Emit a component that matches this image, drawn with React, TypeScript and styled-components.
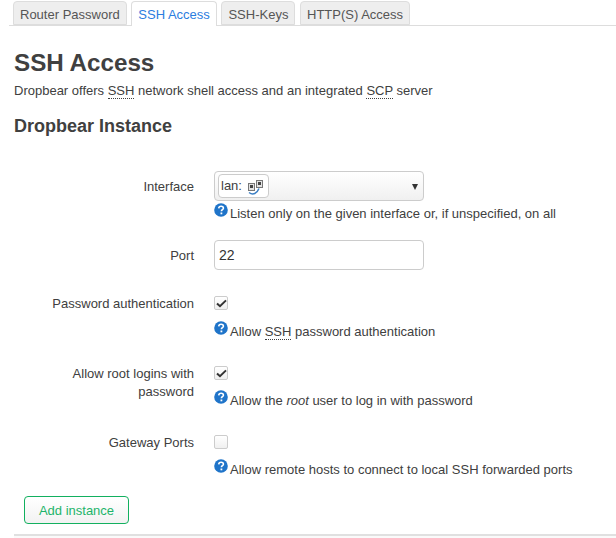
import * as React from 'react';
import styled, { createGlobalStyle } from 'styled-components';

const GlobalStyle = createGlobalStyle`
  html, body {
    margin: 0;
    padding: 0;
    background: #fff;
    overflow: hidden;
  }
  body {
    font-family: "Liberation Sans", Arial, sans-serif;
    font-size: 13px;
    line-height: 18px;
    color: #404040;
  }
`;

const Page = styled.div`
  width: 616px;
  height: 538px;
  overflow: hidden;
`;

const Tabs = styled.ul`
  display: flex;
  gap: 4.6px;
  list-style: none;
  margin: 1px 0 0 9px;
  padding: 0 0 0 4px;
  height: 24px;
  border-bottom: 1px solid #ddd;
`;

const Tab = styled.li<{ $active?: boolean }>`
  height: ${p => (p.$active ? 25 : 24)}px;
  box-sizing: border-box;
  padding: 0 6px;
  line-height: 26px;
  border: 1px solid #ddd;
  border-bottom: ${p => (p.$active ? 'none' : '1px solid #ddd')};
  border-radius: 4px 4px 0 0;
  background: ${p => (p.$active ? '#fff' : '#eee')};
  color: ${p => (p.$active ? '#2b7de0' : '#555')};
`;

const Content = styled.div`
  padding: 0 0 0 14px;
`;

const Title = styled.h2`
  margin: 22px 0 0;
  font-size: 24.2px;
  line-height: 30px;
  font-weight: 700;
  color: #404040;
`;

const Description = styled.p`
  margin: 4px 0 0;
  color: #404040;
`;

const Abbr = styled.abbr`
  text-decoration: none;
  border-bottom: 1px dotted #404040;
`;

const SectionTitle = styled.h3`
  margin: 15px 0 0;
  font-size: 18px;
  line-height: 22px;
  font-weight: 700;
  color: #404040;
`;

const Form = styled.div`
  margin-top: 34px;
  display: flex;
  flex-direction: column;
`;

const Row = styled.div<{ $gap: number }>`
  display: grid;
  grid-template-columns: 180px 1fr;
  column-gap: 20px;
  margin-bottom: ${p => p.$gap}px;
`;

const Label = styled.label<{ $top: number }>`
  text-align: right;
  color: #404040;
  padding-top: ${p => p.$top}px;
`;

const Field = styled.div`
  display: flex;
  flex-direction: column;
  align-items: flex-start;
`;

const Select = styled.div`
  width: 210px;
  height: 30px;
  box-sizing: border-box;
  border: 1px solid #ccc;
  border-radius: 4px;
  background: linear-gradient(#fff, #f0f0f0);
  display: flex;
  align-items: center;
  justify-content: space-between;
  padding: 0 5px 0 3px;
`;

const Badge = styled.span`
  display: flex;
  align-items: center;
  gap: 5px;
  height: 24px;
  width: 51px;
  box-sizing: border-box;
  padding-left: 2px;
  border: 1px solid #ccc;
  border-radius: 4px;
  background: #fff;
`;

const Arrow = styled.span`
  width: 0;
  height: 0;
  border-left: 3px solid transparent;
  border-right: 3px solid transparent;
  border-top: 6px solid #333;
  margin-top: 2px;
`;

const TextInput = styled.div`
  width: 210px;
  height: 30px;
  box-sizing: border-box;
  border: 1px solid #ccc;
  border-radius: 4px;
  background: #fff;
  padding: 0 4px;
  font-size: 14px;
  line-height: 28px;
  color: #333;
`;

const Box = styled.span`
  display: flex;
  align-items: center;
  justify-content: center;
  width: 14px;
  height: 14px;
  box-sizing: border-box;
  margin-top: 2px;
  border: 1px solid #ccc;
  border-radius: 2px;
  background: linear-gradient(#fff, #f0f0f0);
`;

const Help = styled.div<{ $top: number }>`
  display: flex;
  gap: 2px;
  margin-top: ${p => p.$top}px;
  white-space: nowrap;
  color: #404040;
`;

const HelpIcon = styled.svg`
  width: 14px;
  height: 14px;
  margin-top: -2px;
  flex: none;
`;

const NetIcon = styled.svg`
  width: 17px;
  height: 15px;
  margin-top: 2px;
  flex: none;
`;

const Actions = styled.div`
  padding: 0 0 0 10px;
`;

const AddButton = styled.button`
  width: 105px;
  height: 28px;
  padding: 1px 0 0;
  border: 1px solid #12b05f;
  border-radius: 4px;
  background: linear-gradient(#fff, #f2f2f2);
  color: #1db46a;
  font: inherit;
`;

const Footer = styled.div`
  margin-top: 10px;
  height: 20px;
  border-top: 2px solid #e0e0e0;
  background: #fafafa;
`;

const Check = () => (
  <svg width="11" height="9" viewBox="0 0 11 9">
    <path d="M1 4.4 L4 7.2 L10 1.4" fill="none" stroke="#333" strokeWidth="2" />
  </svg>
);

const Info = () => (
  <HelpIcon viewBox="0 0 14 14">
    <circle cx="7" cy="7" r="6.8" fill="#1f74c9" />
    <path
      d="M4.7 5.4 C4.8 3.9 5.8 3.2 7.1 3.2 C8.5 3.2 9.4 4 9.4 5.2 C9.4 6.7 7.4 6.7 7.4 8.3"
      fill="none"
      stroke="#fff"
      strokeWidth="1.6"
    />
    <rect x="6.5" y="9.5" width="1.8" height="1.8" fill="#fff" />
  </HelpIcon>
);

const NetworkIcon = () => (
  <NetIcon viewBox="0 0 17 15">
    <rect x="1.5" y="3.5" width="6" height="7" fill="#e2e2e2" stroke="#777" />
    <rect x="3" y="5" width="3" height="3" fill="#444" />
    <rect x="9.5" y="0.5" width="6" height="7" fill="#e2e2e2" stroke="#777" />
    <rect x="11" y="2" width="3" height="3" fill="#444" />
    <path d="M2 12.5 C6 15.5 10 13.5 12 8.5" fill="none" stroke="#3b7fc4" strokeWidth="1.5" />
  </NetIcon>
);

export default function App() {
  return (
    <Page>
      <GlobalStyle />
      <Tabs>
        <Tab>Router Password</Tab>
        <Tab $active>SSH Access</Tab>
        <Tab>SSH-Keys</Tab>
        <Tab>HTTP(S) Access</Tab>
      </Tabs>
      <Content>
        <Title>SSH Access</Title>
        <Description>
          Dropbear offers <Abbr>SSH</Abbr> network shell access and an integrated <Abbr>SCP</Abbr> server
        </Description>
        <SectionTitle>Dropbear Instance</SectionTitle>
        <Form>
          <Row $gap={17}>
            <Label $top={7}>Interface</Label>
            <Field>
              <Select>
                <Badge>
                  lan:
                  <NetworkIcon />
                </Badge>
                <Arrow />
              </Select>
              <Help $top={4}>
                <Info />
                Listen only on the given interface or, if unspecified, on all
              </Help>
            </Field>
          </Row>
          <Row $gap={24}>
            <Label $top={7}>Port</Label>
            <Field>
              <TextInput>22</TextInput>
            </Field>
          </Row>
          <Row $gap={23}>
            <Label $top={1}>Password authentication</Label>
            <Field>
              <Box>
                <Check />
              </Box>
              <Help $top={13}>
                <Info />
                <span>
                  Allow <Abbr>SSH</Abbr> password authentication
                </span>
              </Help>
            </Field>
          </Row>
          <Row $gap={23}>
            <Label $top={1}>Allow root logins with password</Label>
            <Field>
              <Box>
                <Check />
              </Box>
              <Help $top={12}>
                <Info />
                <span>
                  Allow the <em>root</em> user to log in with password
                </span>
              </Help>
            </Field>
          </Row>
          <Row $gap={17}>
            <Label $top={1}>Gateway Ports</Label>
            <Field>
              <Box />
              <Help $top={12}>
                <Info />
                Allow remote hosts to connect to local SSH forwarded ports
              </Help>
            </Field>
          </Row>
        </Form>
        <Actions>
          <AddButton>Add instance</AddButton>
        </Actions>
        <Footer />
      </Content>
    </Page>
  );
}
